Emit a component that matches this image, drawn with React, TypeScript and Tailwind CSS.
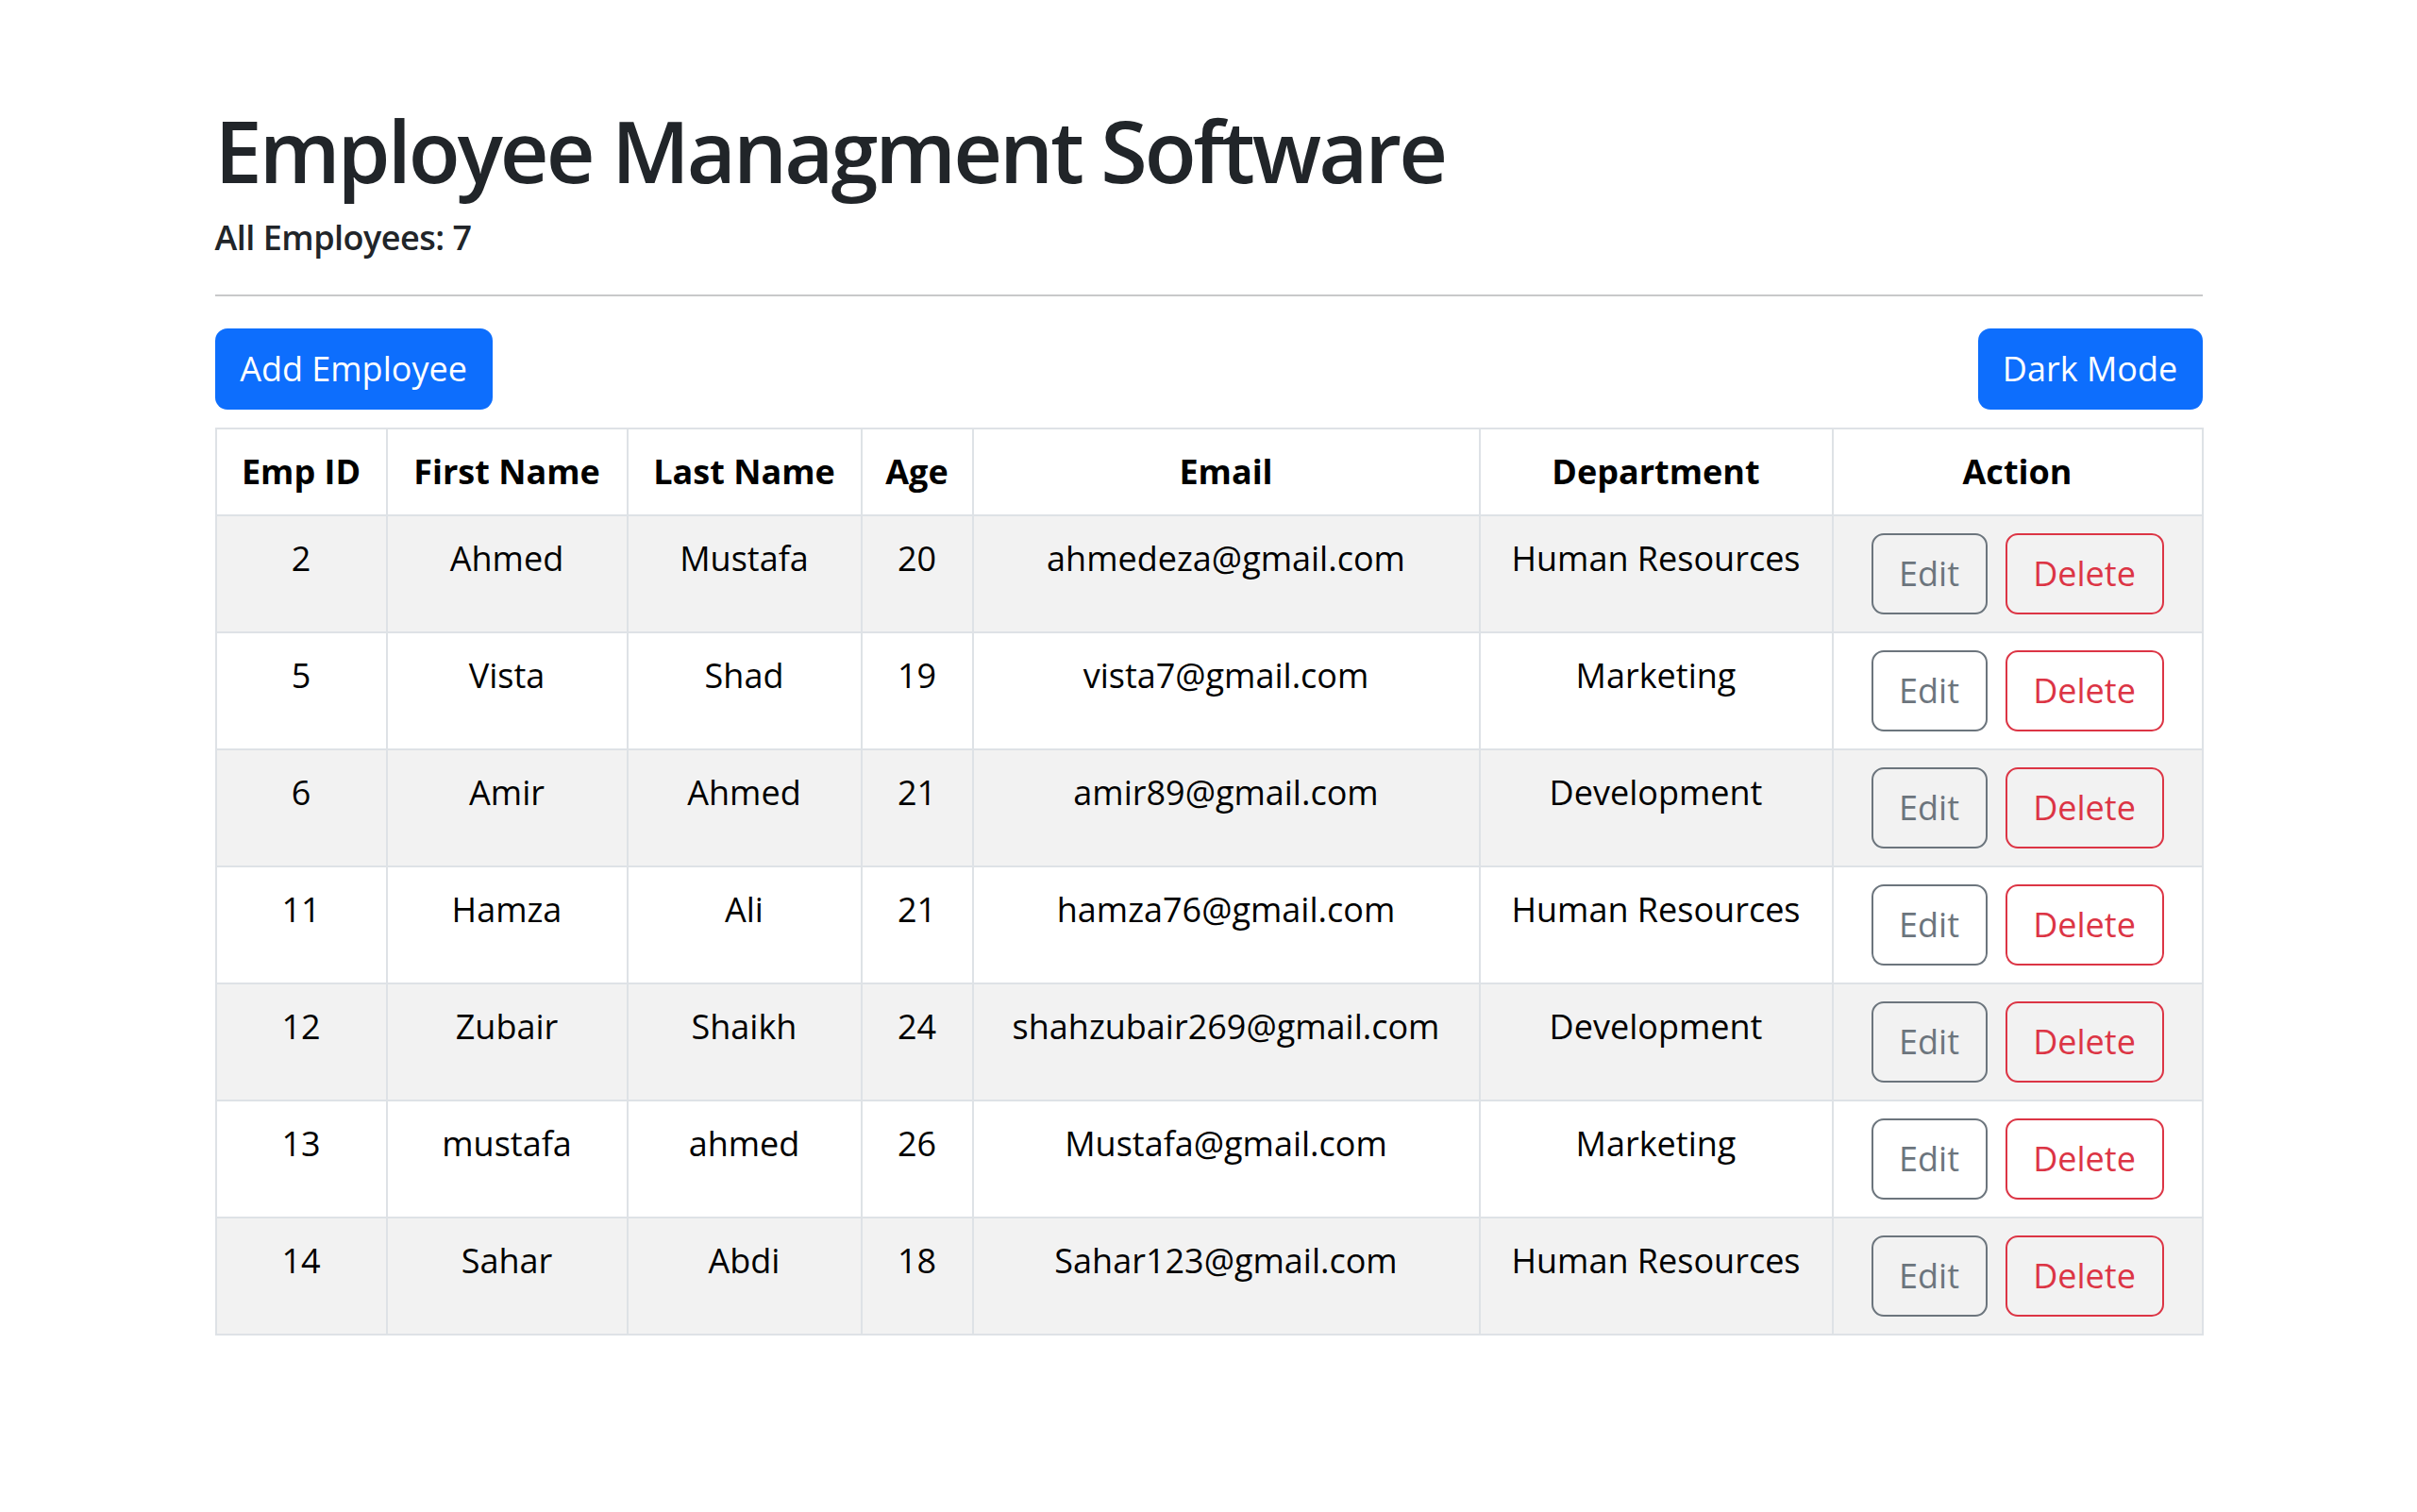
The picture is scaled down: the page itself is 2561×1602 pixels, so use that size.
const employees = [
  { id: 2, first: "Ahmed", last: "Mustafa", age: 20, email: "ahmedeza@gmail.com", dept: "Human Resources" },
  { id: 5, first: "Vista", last: "Shad", age: 19, email: "vista7@gmail.com", dept: "Marketing" },
  { id: 6, first: "Amir", last: "Ahmed", age: 21, email: "amir89@gmail.com", dept: "Development" },
  { id: 11, first: "Hamza", last: "Ali", age: 21, email: "hamza76@gmail.com", dept: "Human Resources" },
  { id: 12, first: "Zubair", last: "Shaikh", age: 24, email: "shahzubair269@gmail.com", dept: "Development" },
  { id: 13, first: "mustafa", last: "ahmed", age: 26, email: "Mustafa@gmail.com", dept: "Marketing" },
  { id: 14, first: "Sahar", last: "Abdi", age: 18, email: "Sahar123@gmail.com", dept: "Human Resources" },
];

const headers = ["Emp ID", "First Name", "Last Name", "Age", "Email", "Department", "Action"];

export default function App() {
  return (
    <div
      className="min-h-screen bg-white text-[#212529]"
      style={{ fontFamily: '"Open Sans", "Noto Sans", sans-serif' }}
    >
      <div className="mx-auto w-[2106px] pt-[105px]">
        {/* Header */}
        <h1 className="mb-[12px] text-[90px] font-semibold leading-[108px] tracking-[-3px]">
          Employee Managment Software
        </h1>
        <p className="text-[36px] font-semibold leading-[54px] tracking-[-0.5px]">All Employees: 7</p>
        <hr className="mt-[33px] mb-[34px] border-0 border-t-2 border-[#c8c9ca]" />

        <div className="mb-[19px] flex items-center justify-between">
          <button className="h-[86px] w-[294px] rounded-[13px] bg-[#0d6efd] text-[36px] leading-[54px] text-white">
            Add Employee
          </button>
          <button className="h-[86px] w-[238px] rounded-[13px] bg-[#0d6efd] text-[36px] leading-[54px] text-white">
            Dark Mode
          </button>
        </div>

        {/* Table */}
        <table className="w-[2105px] table-fixed border-collapse text-[36px] leading-[54px] text-black">
          <colgroup>
            <col className="w-[181px]" />
            <col className="w-[255px]" />
            <col className="w-[248px]" />
            <col className="w-[118px]" />
            <col className="w-[537px]" />
            <col className="w-[374px]" />
            <col className="w-[392px]" />
          </colgroup>
          <thead>
            <tr>
              {headers.map((h) => (
                <th key={h} className="border-2 border-[#dee2e6] p-[18px] text-center align-top font-bold">
                  {h}
                </th>
              ))}
            </tr>
          </thead>
          <tbody>
            {employees.map((e, i) => (
              <tr key={e.id} className={i % 2 === 0 ? "bg-[#f2f2f2]" : "bg-white"}>
                <td className="border-2 border-[#dee2e6] p-[18px] text-center align-top">{e.id}</td>
                <td className="border-2 border-[#dee2e6] p-[18px] text-center align-top">{e.first}</td>
                <td className="border-2 border-[#dee2e6] p-[18px] text-center align-top">{e.last}</td>
                <td className="border-2 border-[#dee2e6] p-[18px] text-center align-top">{e.age}</td>
                <td className="border-2 border-[#dee2e6] p-[18px] text-center align-top">{e.email}</td>
                <td className="border-2 border-[#dee2e6] p-[18px] text-center align-top">{e.dept}</td>
                <td className="border-2 border-[#dee2e6] p-[18px] align-top">
                  <div className="flex justify-center gap-[19px]">
                    <button className="h-[86px] w-[123px] rounded-[13px] border-2 border-[#6c757d] text-[36px] leading-[54px] text-[#6c757d]">
                      Edit
                    </button>
                    <button className="h-[86px] w-[168px] rounded-[13px] border-2 border-[#dc3545] text-[36px] leading-[54px] text-[#dc3545]">
                      Delete
                    </button>
                  </div>
                </td>
              </tr>
            ))}
          </tbody>
        </table>
      </div>
    </div>
  );
}
